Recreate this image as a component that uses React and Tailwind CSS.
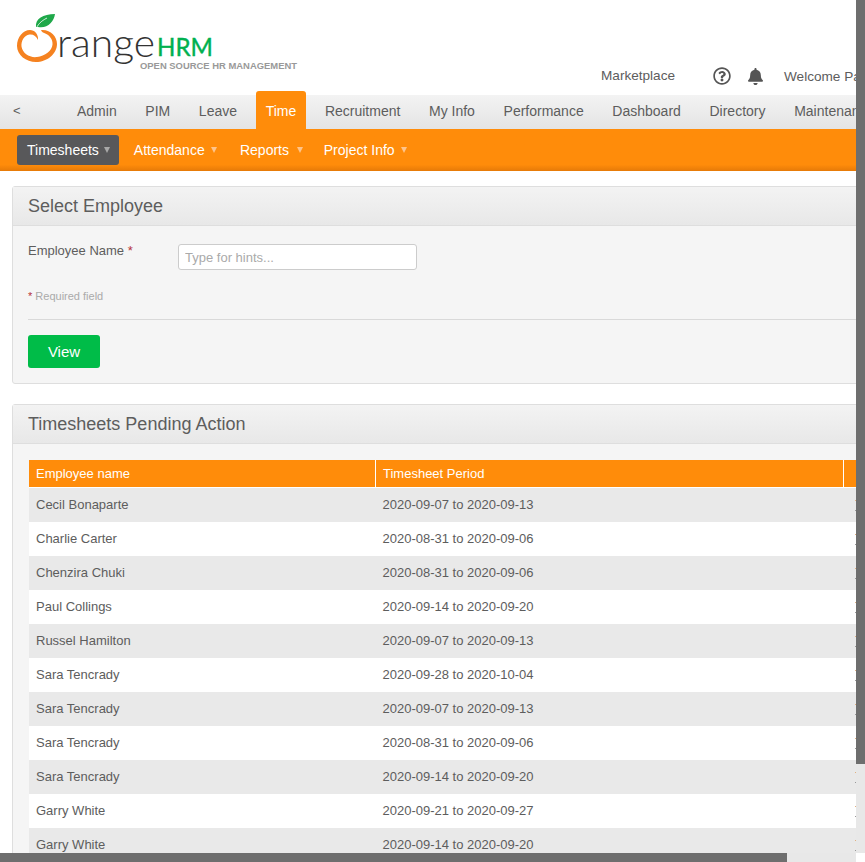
import React from 'react';
import { FaBell, FaRegQuestionCircle } from 'react-icons/fa';

const mainMenu = [
  { label: 'Admin' },
  { label: 'PIM' },
  { label: 'Leave' },
  { label: 'Time', active: true },
  { label: 'Recruitment' },
  { label: 'My Info' },
  { label: 'Performance' },
  { label: 'Dashboard' },
  { label: 'Directory' },
  { label: 'Maintenance' },
];

const subMenu = [
  { label: 'Timesheets', active: true, caret: 'ml-[5px] border-t-[#a8a8a8]' },
  { label: 'Attendance', caret: 'ml-[6.7px] border-t-[#ffc48a]' },
  { label: 'Reports', caret: 'ml-[8.2px] -mr-[2px] border-t-[#ffc48a]' },
  { label: 'Project Info', caret: 'ml-[6.7px] border-t-[#ffc48a]' },
];

const pending = [
  ['Cecil Bonaparte', '2020-09-07 to 2020-09-13'],
  ['Charlie Carter', '2020-08-31 to 2020-09-06'],
  ['Chenzira Chuki', '2020-08-31 to 2020-09-06'],
  ['Paul Collings', '2020-09-14 to 2020-09-20'],
  ['Russel Hamilton', '2020-09-07 to 2020-09-13'],
  ['Sara Tencrady', '2020-09-28 to 2020-10-04'],
  ['Sara Tencrady', '2020-09-07 to 2020-09-13'],
  ['Sara Tencrady', '2020-08-31 to 2020-09-06'],
  ['Sara Tencrady', '2020-09-14 to 2020-09-20'],
  ['Garry White', '2020-09-21 to 2020-09-27'],
  ['Garry White', '2020-09-14 to 2020-09-20'],
];

const Logo = () => (
  <svg width="300" height="72" viewBox="0 0 300 72" className="block">
    <path
      d="M38 40 C36.5 36 33 34 29.5 34.5 C24 35.5 21 41 21.5 46.5 C22.5 53.5 30 58 37 57 C45 56 52 51 52.5 44.5 C53 39.5 49.5 34.5 43 32.5 C42 32 41.5 31 41 30 C50 29 57 36 57 44 C57 54 47 62 36 62 C26 62 17 55 17 46 C17 37 23 30 30 30 C34.5 30 38.5 34 38 40 Z"
      fill="#f58220"
    />
    <path d="M36 27 C35 19 43 14 55 14 C54 22 47 29 38 27 Z" fill="#1fa84a" />
    <path d="M36 30 C37 25 41 21 47 18" stroke="#ffffff" strokeWidth="0.8" fill="none" />
    <text x="57" y="57" fontFamily="Lato, sans-serif" fontSize="40" fontWeight="300" fill="#333333" textLength="98" lengthAdjust="spacingAndGlyphs">
      range
    </text>
    <text x="157" y="56" fontFamily="Lato, sans-serif" fontSize="25" fill="#00b04f" stroke="#00b04f" strokeWidth="0.4" textLength="56" lengthAdjust="spacingAndGlyphs">
      HRM
    </text>
    <text x="140" y="68.5" fontFamily="'Liberation Sans', sans-serif" fontSize="9.5" fontWeight="700" fill="#999999" textLength="157" lengthAdjust="spacingAndGlyphs">
      OPEN SOURCE HR MANAGEMENT
    </text>
  </svg>
);

const Panel = ({ title, children }) => (
  <div className="rounded-[3px] border border-[#dedede] bg-[#f5f5f5]">
    <div className="flex h-[39px] items-center border-b border-[#dedede] bg-gradient-to-b from-[#f3f3f3] to-[#e8e8e8] px-[15px] text-[18px] text-[#5d5d5d]">
      {title}
    </div>
    {children}
  </div>
);

const App = () => {
  return (
    <div className="flex h-[862px] w-[865px] flex-col overflow-hidden bg-white font-['Liberation_Sans',sans-serif] text-[#5d5d5d]">
      <div className="flex min-h-0 flex-1">
        <div className="min-w-0 flex-1 overflow-hidden">
          <div className="w-[931px]">
            {/* Header */}
            <div className="flex h-[95px]">
              <div className="w-[601px]">
                <Logo />
              </div>
              <div className="flex h-[40px] w-[330px] items-center self-end pt-[2px] text-[13.6px]">
                <span className="w-[112px] whitespace-nowrap">Marketplace</span>
                <FaRegQuestionCircle className="h-[18px] w-[18px] text-[#555555]" />
                <FaBell className="ml-[16px] h-[17px] w-[17px] text-[#555555]" />
                <span className="ml-[20px] mt-[2px] whitespace-nowrap">Welcome Paul</span>
              </div>
            </div>

            {/* Main menu */}
            <div className="flex h-[34px] items-start bg-gradient-to-b from-[#f3f3f3] to-[#e4e4e4] text-[14px]">
              <span className="mt-[9px] w-[67px] pl-[13px] text-[13px] leading-none">&lt;</span>
              <div className="flex gap-[8.65px]">
                {mainMenu.map((item) =>
                  item.active ? (
                    <div key={item.label} className="-mt-[4px] flex h-[38px] items-center rounded-t-[3px] bg-[#ff8c0a] px-[10px] pt-[2px] text-white">
                      {item.label}
                    </div>
                  ) : (
                    <div key={item.label} className="flex h-[33px] items-center px-[10px] whitespace-nowrap">
                      {item.label}
                    </div>
                  )
                )}
              </div>
            </div>

            {/* Sub menu */}
            <div className="flex h-[42px] gap-[5px] bg-gradient-to-b from-[#ff8c0a] from-85% to-[#e67a08] pl-[17px] pt-[6px] text-[14px] text-white">
              {subMenu.map((item) => (
                <div
                  key={item.label}
                  className={
                    item.active
                      ? 'flex h-[30px] items-center rounded-[3px] bg-[#58585a] pl-[10px] pr-[9px]'
                      : 'flex h-[30px] items-center pl-[10px] pr-[7.6px]'
                  }
                >
                  <span>{item.label}</span>
                  <span className={`h-0 w-0 border-x-[3px] border-t-[6px] border-x-transparent ${item.caret}`} />
                </div>
              ))}
            </div>

            {/* Content */}
            <div className="flex flex-col gap-[20px] px-[12px] pt-[15px]">
              <Panel title="Select Employee">
                <div className="px-[15px] pb-[15px] pt-[18px]">
                  <div className="flex h-[26px] text-[13px]">
                    <label className="w-[150px] leading-[13px]">
                      Employee Name <span className="text-[#b5323a]">*</span>
                    </label>
                    <input
                      placeholder="Type for hints..."
                      className="h-[26px] w-[239px] rounded-[3px] border border-[#cccccc] bg-white px-[6px] text-[13px] placeholder:text-[#aaaaaa]"
                    />
                  </div>
                  <p className="mt-[20px] text-[11px] leading-[13px] text-[#aaaaaa]">
                    <span className="text-[#b5323a]">*</span> Required field
                  </p>
                  <div className="mt-[16px] border-t border-[#d9d9d9]" />
                  <button className="mt-[15px] h-[33px] w-[72px] rounded-[3px] bg-[#00bc48] pt-[1px] text-[15px] text-white">
                    View
                  </button>
                </div>
              </Panel>

              <Panel title="Timesheets Pending Action">
                <div className="px-[16px] pt-[16px]">
                  <table className="w-full table-fixed border-separate border-spacing-0 text-[13px]">
                    <colgroup>
                      <col className="w-[347px]" />
                      <col className="w-[468px]" />
                      <col />
                    </colgroup>
                    <thead>
                      <tr className="h-[28px] bg-[#ff8c0a] text-left text-white">
                        <th className="border-r border-b border-white px-[7px] font-normal">Employee name</th>
                        <th className="border-r border-b border-white px-[7px] font-normal">Timesheet Period</th>
                        <th className="border-b border-white" />
                      </tr>
                    </thead>
                    <tbody>
                      {pending.map(([name, period], i) => (
                        <tr key={i} className={i % 2 === 0 ? 'h-[34px] bg-[#e9e9e9]' : 'h-[34px] bg-white'}>
                          <td className="px-[7px]">{name}</td>
                          <td className="px-[6.5px]">{period}</td>
                          <td className="pl-[11px]">
                            <div className="h-px w-[9px] bg-[#e0b080]" />
                            <div className="mt-[9px] h-px w-[9px] bg-[#999999]" />
                          </td>
                        </tr>
                      ))}
                    </tbody>
                  </table>
                </div>
              </Panel>
            </div>
          </div>
        </div>

        {/* Vertical scrollbar */}
        <div className="flex w-[9px] flex-col bg-[#e8e8e8]">
          <div className="h-[764px] bg-[#6e6e6e]" />
        </div>
      </div>

      {/* Horizontal scrollbar */}
      <div className="flex h-[9px]">
        <div className="w-[787px] bg-[#6e6e6e]" />
        <div className="w-[69px] bg-[#e8e8e8]" />
        <div className="w-[9px] bg-white" />
      </div>
    </div>
  );
};

export default App;
